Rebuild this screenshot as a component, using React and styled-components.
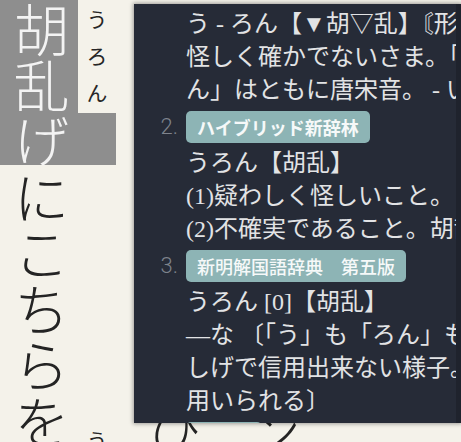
import styled, { createGlobalStyle } from "styled-components";

const GlobalStyle = createGlobalStyle`
  html, body {
    margin: 0;
    padding: 0;
  }
  body {
    width: 461px;
    height: 442px;
    overflow: hidden;
    background: #f4f2ea;
    font-family: "Noto Sans CJK JP", sans-serif;
  }
`;

const Page = styled.div`
  position: relative;
  width: 461px;
  height: 442px;
  overflow: hidden;
  display: flex;
  align-items: flex-start;
`;

const Column = styled.div`
  display: flex;
  flex-direction: column;
  width: 116px;
  flex: none;
`;

const Segment = styled.div`
  display: flex;
  height: ${(p) => p.$h}px;
  width: ${(p) => (p.$full ? "116px" : "auto")};
  background: ${(p) => (p.$selected && p.$full ? "#8e8e8e" : "transparent")};
`;

const MainText = styled.div`
  writing-mode: vertical-rl;
  width: 74px;
  padding-left: ${(p) => p.$shift ?? 4}px;
  padding-top: ${(p) => p.$top || 0}px;
  font-size: 56px;
  line-height: 74px;
  font-weight: 300;
  white-space: nowrap;
  color: ${(p) => (p.$selected ? "#f3f3f3" : "#242424")};
  background: ${(p) => (p.$selected ? "#8e8e8e" : "transparent")};
`;

const RubyText = styled.div`
  writing-mode: vertical-rl;
  width: 38px;
  padding-top: ${(p) => p.$top || 0}px;
  font-size: 21px;
  line-height: 38px;
  letter-spacing: 16px;
  white-space: nowrap;
  color: #262626;
`;

const Popup = styled.div`
  position: absolute;
  z-index: 2;
  left: 134px;
  top: 4px;
  width: 327px;
  height: 419px;
  display: flex;
  background: #262b37;
  box-shadow: 0 0 4px 1px rgba(0, 0, 0, 0.35);
  color: #e2e3e5;
  font-family: "Liberation Serif", "Noto Sans CJK JP", serif;
`;

const Scroll = styled.div`
  flex: 1;
  min-width: 0;
  overflow: hidden;
  padding-top: 3.5px;
`;

const Track = styled.div`
  width: 5px;
  flex: none;
  background: #1f232d;
`;

const Entry = styled.div`
  display: flex;
  align-items: flex-start;
`;

const Num = styled.div`
  width: 44px;
  flex: none;
  padding-right: 8px;
  margin-top: 4px;
  text-align: right;
  font-family: Roboto, "Noto Sans", sans-serif;
  font-weight: 300;
  font-size: 22px;
  line-height: 32px;
  color: #7e838c;
`;

const Body = styled.div`
  flex: 1;
  min-width: 0;
`;

const Badge = styled.div`
  display: inline-block;
  height: 32px;
  margin: 4px 0;
  padding: 0 11px;
  border-radius: 5px;
  background: #8db4b5;
  color: #f6f9f9;
  font-family: "Noto Sans CJK JP", sans-serif;
  font-size: 18px;
  font-weight: ${(p) => (p.$bold ? 700 : 500)};
  line-height: 32px;
  white-space: nowrap;
`;

const Line = styled.div`
  font-size: 24px;
  line-height: 33px;
  white-space: nowrap;
`;

const entries = [
  {
    n: "2.",
    dict: "ハイブリッド新辞林",
    bold: true,
    lines: [
      "うろん【胡乱】",
      "(1)疑わしく怪しいこと。また、そのさま。",
      "(2)不確実であること。胡散(うさん)。",
    ],
  },
  {
    n: "3.",
    dict: "新明解国語辞典　第五版",
    lines: [
      "うろん [0]【胡乱】",
      "—な 〔「う」も「ろん」も唐宋音〕",
      "しげで信用出来ない様子。〔多く、人に",
      "用いられる〕",
    ],
  },
  { n: "4.", dict: "大辞泉", bold: true, lines: ["うろん【胡乱】"] },
];

export default function App() {
  return (
    <>
      <GlobalStyle />
      <Page>
        <Column>
          <Segment $h={113}>
            <MainText $selected $top={2}>
              胡乱
            </MainText>
            <RubyText $top={9}>うろん</RubyText>
          </Segment>
          <Segment $h={52} $full $selected>
            <MainText $selected>げ</MainText>
          </Segment>
          <Segment $h={277}>
            <MainText $top={5}>にこちらを</MainText>
            <RubyText $top={265}>う</RubyText>
          </Segment>
        </Column>
        <Column>
          <MainText $shift={20} $top={8}>
            る男の顔を見つひめ
          </MainText>
        </Column>
        <Column>
          <MainText $shift={4} $top={12}>
            しばらく黙ってンだ
          </MainText>
        </Column>

        <Popup>
          <Scroll>
            <Entry>
              <Num />
              <Body>
                <Line>う - ろん【▼胡▽乱】〘形動〙〔文〕ナリ</Line>
                <Line>怪しく確かでないさま。「う」「ろ</Line>
                <Line>ん」はともに唐宋音。 - い人物</Line>
              </Body>
            </Entry>
            {entries.map((e) => (
              <Entry key={e.n}>
                <Num>{e.n}</Num>
                <Body>
                  <Badge $bold={e.bold}>{e.dict}</Badge>
                  {e.lines.map((l) => (
                    <Line key={l}>{l}</Line>
                  ))}
                </Body>
              </Entry>
            ))}
          </Scroll>
          <Track />
        </Popup>
      </Page>
    </>
  );
}
